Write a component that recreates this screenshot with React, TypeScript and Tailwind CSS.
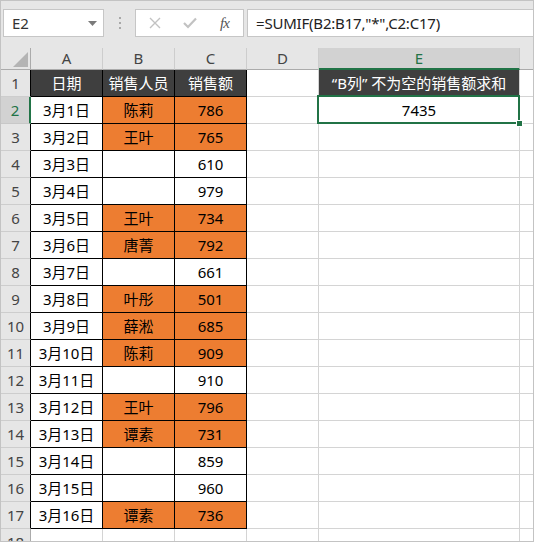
import React from "react";

type Row = [string, string, string];

const data: Row[] = [
  ["3月1日", "陈莉", "786"],
  ["3月2日", "王叶", "765"],
  ["3月3日", "", "610"],
  ["3月4日", "", "979"],
  ["3月5日", "王叶", "734"],
  ["3月6日", "唐菁", "792"],
  ["3月7日", "", "661"],
  ["3月8日", "叶彤", "501"],
  ["3月9日", "薛淞", "685"],
  ["3月10日", "陈莉", "909"],
  ["3月11日", "", "910"],
  ["3月12日", "王叶", "796"],
  ["3月13日", "谭素", "731"],
  ["3月14日", "", "859"],
  ["3月15日", "", "960"],
  ["3月16日", "谭素", "736"],
];

function ColHeader({ label, selected, wide }: { label: string; selected?: boolean; wide?: boolean }) {
  if (selected) {
    return (
      <div className="w-[201px] h-full bg-[#d2d2d2] border-r border-[#c8c8c8] border-b-2 border-b-[#217346] flex items-center justify-center text-[15px] text-[#217346] pt-[1px]">
        {label}
      </div>
    );
  }
  return (
    <div className={(wide ? "w-[201px]" : "w-[72px]") + " h-full bg-[#e6e6e6] border-r border-[#cdcdcd] border-b border-b-[#ababab] flex items-center justify-center text-[15px] text-[#444444]"}>
      {label}
    </div>
  );
}

function RowHeader({ n, selected, inTable }: { n: number; selected?: boolean; inTable?: boolean }) {
  if (selected) {
    return (
      <div className="w-[30px] h-full bg-[#d2d2d2] border-b border-[#c8c8c8] border-r-2 border-r-[#217346] flex items-center justify-center text-[15px] text-[#217346]">
        {n}
      </div>
    );
  }
  return (
    <div
      className={
        "w-[30px] h-full bg-[#e6e6e6] border-b border-[#cdcdcd] border-r flex items-center justify-center text-[15px] text-[#444444] " +
        (inTable ? "border-r-black" : "border-r-[#ababab]")
      }
    >
      {n}
    </div>
  );
}

export default function App() {
  return (
    <div className="w-[534px] h-[542px] overflow-hidden bg-white border border-[#c3c3c3] font-['Noto_Sans','Noto_Sans_CJK_SC',sans-serif] text-black">
      {/* Formula bar */}
      <div className="h-[47px] bg-[#e6e6e6] flex items-start pt-[8px]">
        <div className="ml-[2px] w-[101px] h-[28px] bg-white border border-[#c6c6c6] flex items-center pl-[8px] pr-[6px]">
          <span className="text-[15px] text-[#333333] flex-1">E2</span>
          <svg width="9" height="5" viewBox="0 0 9 5">
            <path d="M0 0 L9 0 L4.5 5 Z" fill="#7a7a7a" />
          </svg>
        </div>
        <div className="w-[31px] h-[28px] flex flex-col items-center justify-center gap-[3px]">
          <span className="w-[2px] h-[2px] bg-[#a8a8a8]" />
          <span className="w-[2px] h-[2px] bg-[#a8a8a8]" />
          <span className="w-[2px] h-[2px] bg-[#a8a8a8]" />
        </div>
        <div className="w-[109px] h-[28px] bg-white border border-[#c6c6c6] flex items-center">
          <div className="w-[36px] flex justify-center pl-[2px]">
            <svg width="12" height="12" viewBox="0 0 12 12">
              <path d="M1 1 L11 11 M11 1 L1 11" stroke="#c2c2c2" strokeWidth="1.4" />
            </svg>
          </div>
          <div className="w-[36px] flex justify-center">
            <svg width="14" height="12" viewBox="0 0 14 12">
              <path d="M1 6 L5 10 L13 1.5" stroke="#c2c2c2" strokeWidth="2.2" fill="none" />
            </svg>
          </div>
          <div className="flex-1 flex justify-center pr-[2px]">
            <span className="font-['Liberation_Serif',serif] italic text-[15px] text-[#555555] leading-none tracking-[-1px]">fx</span>
          </div>
        </div>
        <div className="ml-[3px] flex-1 h-[28px] bg-white border border-[#c6c6c6] border-r-0 flex items-center pl-[8px]">
          <span className="text-[15px] text-[#222222] tracking-[-0.2px]">=SUMIF(B2:B17,"*",C2:C17)</span>
        </div>
      </div>

      {/* Column headers */}
      <div className="flex h-[22px]">
        <div className="w-[30px] h-full bg-[#e6e6e6] border-r border-[#ababab] border-b border-b-[#ababab] flex items-end justify-end pr-[2px] pb-[2px]">
          <svg width="15" height="15" viewBox="0 0 15 15">
            <path d="M15 0 L15 15 L0 15 Z" fill="#b4b4b4" />
          </svg>
        </div>
        <ColHeader label="A" />
        <ColHeader label="B" />
        <ColHeader label="C" />
        <ColHeader label="D" />
        <ColHeader label="E" selected />
        <div className="flex-1 h-full bg-[#e6e6e6] border-b border-[#ababab]" />
      </div>

      {/* Row 1 */}
      <div className="flex h-[27px]">
        <RowHeader n={1} inTable />
        <div className="w-[72px] h-full bg-[#3f3f3f] border-r border-b border-black flex items-center justify-center text-[15px] text-white">日期</div>
        <div className="w-[72px] h-full bg-[#3f3f3f] border-r border-b border-black flex items-center justify-center text-[15px] text-white">销售人员</div>
        <div className="w-[72px] h-full bg-[#3f3f3f] border-r border-b border-black flex items-center justify-center text-[15px] text-white">销售额</div>
        <div className="w-[72px] h-full border-r border-b border-[#d4d4d4]" />
        <div className="w-[201px] h-full bg-[#3f3f3f] border-r border-b border-[#d4d4d4] flex items-center justify-center text-[15px] text-white">
          “B列” 不为空的销售额求和
        </div>
        <div className="flex-1 h-full border-b border-[#d4d4d4]" />
      </div>

      {/* Data rows */}
      {data.map((r, i) => {
        const n = i + 2;
        const filled = r[1] !== "";
        const bc = filled ? "bg-[#ed7d31]" : "bg-white";
        return (
          <div key={n} className="flex h-[27px]">
            <RowHeader n={n} selected={n === 2} inTable />
            <div className="w-[72px] h-full bg-white border-r border-b border-black flex items-center justify-center text-[15px]">{r[0]}</div>
            <div className={"w-[72px] h-full border-r border-b border-black flex items-center justify-center text-[15px] " + bc}>{r[1]}</div>
            <div className={"w-[72px] h-full border-r border-b border-black flex items-center justify-center text-[15px] " + bc}>{r[2]}</div>
            <div className="w-[72px] h-full border-r border-b border-[#d4d4d4]" />
            <div className="relative w-[201px] h-full border-r border-b border-[#d4d4d4] flex items-center justify-center text-[15px]">
              {n === 2 ? (
                <>
                  <span>7435</span>
                  <div className="absolute -top-[2px] -left-[2px] -right-[1px] -bottom-[1px] border-2 border-[#217346] z-10" />
                  <div className="absolute -right-[4px] -bottom-[4px] w-[7px] h-[7px] bg-[#217346] border border-white z-20" />
                </>
              ) : null}
            </div>
            <div className="flex-1 h-full border-b border-[#d4d4d4]" />
          </div>
        );
      })}

      {/* Row 18 (partial) */}
      <div className="flex h-[27px]">
        <RowHeader n={18} />
        <div className="w-[72px] h-full border-r border-b border-[#d4d4d4]" />
        <div className="w-[72px] h-full border-r border-b border-[#d4d4d4]" />
        <div className="w-[72px] h-full border-r border-b border-[#d4d4d4]" />
        <div className="w-[72px] h-full border-r border-b border-[#d4d4d4]" />
        <div className="w-[201px] h-full border-r border-b border-[#d4d4d4]" />
        <div className="flex-1 h-full border-b border-[#d4d4d4]" />
      </div>
    </div>
  );
}
